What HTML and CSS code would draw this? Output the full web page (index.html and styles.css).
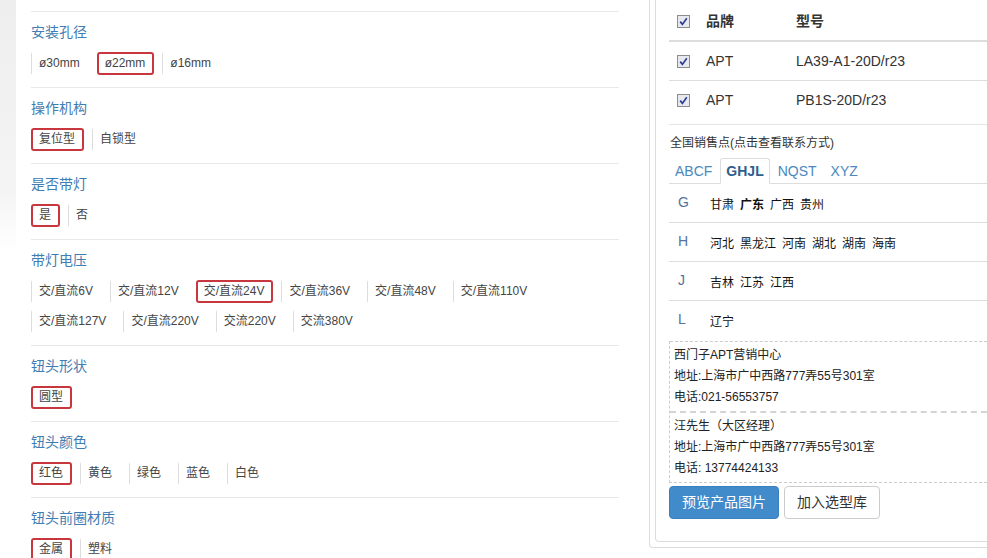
FILE: index.html
```html
<!DOCTYPE html>
<html lang="zh-CN">
<head>
    <meta charset="UTF-8">
    <meta name="viewport" content="width=device-width, initial-scale=1.0">
    <title>选型</title>
    <link rel="stylesheet" href="styles.css">
</head>
<body>
    <div class="page">
        <div class="side-shade"></div>
        <div class="filters">
            <div class="filter">
                <h3 class="filter-title">安装孔径</h3>
                <div class="options">
                    <span class="opt">ø30mm</span>
                    <span class="opt on">ø22mm</span>
                    <span class="opt">ø16mm</span>
                </div>
            </div>
            <div class="filter">
                <h3 class="filter-title">操作机构</h3>
                <div class="options">
                    <span class="opt on">复位型</span>
                    <span class="opt">自锁型</span>
                </div>
            </div>
            <div class="filter">
                <h3 class="filter-title">是否带灯</h3>
                <div class="options">
                    <span class="opt on">是</span>
                    <span class="opt">否</span>
                </div>
            </div>
            <div class="filter">
                <h3 class="filter-title">带灯电压</h3>
                <div class="options">
                    <span class="opt">交/直流6V</span>
                    <span class="opt">交/直流12V</span>
                    <span class="opt on">交/直流24V</span>
                    <span class="opt">交/直流36V</span>
                    <span class="opt">交/直流48V</span>
                    <span class="opt">交/直流110V</span>
                    <span class="opt">交/直流127V</span>
                    <span class="opt">交/直流220V</span>
                    <span class="opt">交流220V</span>
                    <span class="opt">交流380V</span>
                </div>
            </div>
            <div class="filter">
                <h3 class="filter-title">钮头形状</h3>
                <div class="options">
                    <span class="opt on">圆型</span>
                </div>
            </div>
            <div class="filter">
                <h3 class="filter-title">钮头颜色</h3>
                <div class="options">
                    <span class="opt on">红色</span>
                    <span class="opt">黄色</span>
                    <span class="opt">绿色</span>
                    <span class="opt">蓝色</span>
                    <span class="opt">白色</span>
                </div>
            </div>
            <div class="filter">
                <h3 class="filter-title">钮头前圈材质</h3>
                <div class="options">
                    <span class="opt on">金属</span>
                    <span class="opt">塑料</span>
                </div>
            </div>
        </div>

        <div class="panel">
            <div class="panel-inner">
                <table class="picked">
                    <colgroup>
                        <col class="c-chk">
                        <col class="c-brand">
                        <col>
                    </colgroup>
                    <thead>
                        <tr>
                            <th><svg class="chk" viewBox="0 0 13 13" width="13" height="13"><rect x="0.5" y="0.5" width="12" height="12" fill="#e8e9ee" stroke="#8c8c8c"/><path d="M3.2 6.6 L5.4 9.4 L9.8 3.2" fill="none" stroke="#2c3f94" stroke-width="1.7"/></svg></th>
                            <th>品牌</th>
                            <th>型号</th>
                        </tr>
                    </thead>
                    <tbody>
                        <tr>
                            <td><svg class="chk" viewBox="0 0 13 13" width="13" height="13"><rect x="0.5" y="0.5" width="12" height="12" fill="#e8e9ee" stroke="#8c8c8c"/><path d="M3.2 6.6 L5.4 9.4 L9.8 3.2" fill="none" stroke="#2c3f94" stroke-width="1.7"/></svg></td>
                            <td>APT</td>
                            <td>LA39-A1-20D/r23</td>
                        </tr>
                        <tr>
                            <td><svg class="chk" viewBox="0 0 13 13" width="13" height="13"><rect x="0.5" y="0.5" width="12" height="12" fill="#e8e9ee" stroke="#8c8c8c"/><path d="M3.2 6.6 L5.4 9.4 L9.8 3.2" fill="none" stroke="#2c3f94" stroke-width="1.7"/></svg></td>
                            <td>APT</td>
                            <td>PB1S-20D/r23</td>
                        </tr>
                    </tbody>
                </table>

                <div class="sales">
                    <p class="sales-title">全国销售点(点击查看联系方式)</p>
                    <ul class="tabs">
                        <li><a href="#">ABCF</a></li>
                        <li class="active"><a href="#">GHJL</a></li>
                        <li><a href="#">NQST</a></li>
                        <li><a href="#">XYZ</a></li>
                    </ul>
                    <div class="regions">
                        <div class="region">
                            <span class="letter">G</span>
                            <span class="provs"><span>甘肃</span><b>广东</b><span>广西</span><span>贵州</span></span>
                        </div>
                        <div class="region">
                            <span class="letter">H</span>
                            <span class="provs"><span>河北</span><span>黑龙江</span><span>河南</span><span>湖北</span><span>湖南</span><span>海南</span></span>
                        </div>
                        <div class="region">
                            <span class="letter">J</span>
                            <span class="provs"><span>吉林</span><span>江苏</span><span>江西</span></span>
                        </div>
                        <div class="region">
                            <span class="letter">L</span>
                            <span class="provs"><span>辽宁</span></span>
                        </div>
                    </div>
                    <div class="contacts">
                        <div class="contact">
                            <p>西门子APT营销中心</p>
                            <p>地址:上海市广中西路777弄55号301室</p>
                            <p>电话:021-56553757</p>
                        </div>
                        <div class="contact">
                            <p>汪先生（大区经理）</p>
                            <p>地址:上海市广中西路777弄55号301室</p>
                            <p>电话: 13774424133</p>
                        </div>
                    </div>
                    <div class="actions">
                        <button class="btn btn-primary">预览产品图片</button>
                        <button class="btn">加入选型库</button>
                    </div>
                </div>
            </div>
        </div>
    </div>
</body>
</html>
```

FILE: styles.css
```css
* {
    margin: 0;
    padding: 0;
    box-sizing: border-box;
}
html, body {
    width: 987px;
    height: 558px;
    overflow: hidden;
    background: #fff;
}
body {
    font-family: "Liberation Sans", Arial, "Noto Sans CJK SC", sans-serif;
    font-size: 12px;
    color: #333;
}
.page {
    display: flex;
    align-items: flex-start;
    width: 1040px;
}
.side-shade {
    flex: 0 0 16px;
    height: 252px;
    margin-right: 15px;
    background: linear-gradient(to bottom, #eeeeee, #f4f4f4 75%, #ffffff);
}

/* filters */
.filters {
    flex: 0 0 588px;
    margin-right: 30px;
    padding-top: 11px;
}
.filter {
    border-top: 1px solid #e8e8e8;
    padding: 10px 0 12px;
}
.filter-title {
    font-size: 14px;
    font-weight: normal;
    line-height: 20px;
    color: #3f7db3;
    margin-bottom: 10px;
}
.options {
    display: flex;
    flex-wrap: wrap;
    row-gap: 7px;
    max-width: 580px;
}
.opt {
    display: inline-block;
    line-height: 19px;
    padding: 0 7px;
    margin-right: 8px;
    border: 2px solid transparent;
    border-left: 1px solid #dcdcdc;
    color: #444;
    white-space: nowrap;
}
.opt.on {
    border: 2px solid #c7373d;
    border-radius: 3px;
    padding: 0 7px 0 6px;
}

/* right panel */
.panel {
    flex: 0 0 380px;
    border: 1px solid #dcdcdc;
    border-top: 0;
    border-radius: 0 0 4px 4px;
    padding: 0 0 5px 5px;
}
.panel-inner {
    border: 1px solid #dcdcdc;
    border-top: 0;
    border-radius: 0 0 4px 4px;
    padding: 0 0 22px 13px;
}
.picked {
    width: 100%;
    border-collapse: collapse;
    table-layout: fixed;
    font-size: 14px;
    margin-bottom: 5px;
}
.c-chk {
    width: 29px;
}
.c-brand {
    width: 90px;
}
.picked th {
    text-align: left;
    padding: 11px 8px 9px;
    line-height: 20px;
    border-bottom: 2px solid #dddddd;
    color: #333;
}
.picked td {
    padding: 9px 8px;
    line-height: 20px;
    border-top: 1px solid #dddddd;
    color: #333;
}
.picked tbody tr:first-child td {
    border-top: 0;
}
.chk {
    display: block;
}

.sales {
    border-top: 1px solid #e5e5e5;
    padding-top: 8px;
}
.sales-title {
    line-height: 20px;
    color: #333;
    margin-bottom: 5px;
    padding-left: 1px;
}
.tabs {
    display: flex;
    list-style: none;
    border-bottom: 1px solid #dddddd;
    font-size: 14px;
}
.tabs li {
    margin-right: 2px;
    margin-bottom: -1px;
}
.tabs a {
    display: block;
    padding: 3px 5px;
    line-height: 18px;
    border: 1px solid transparent;
    border-radius: 3px 3px 0 0;
    color: #4b88c0;
    text-decoration: none;
}
.tabs .active a {
    border-color: #dddddd #dddddd transparent;
    background: #fff;
    color: #2f5e8c;
    font-weight: bold;
}

.region {
    display: flex;
    align-items: flex-start;
    padding: 11px 0 7px;
    line-height: 20px;
    border-bottom: 1px solid #dddddd;
}
.region:last-child {
    border-bottom: 0;
}
.letter {
    flex: 0 0 41px;
    padding-left: 9px;
    font-size: 14px;
    line-height: 14px;
    color: #56739b;
}
.provs {
    display: flex;
    gap: 6px;
    color: #111;
}
.provs b {
    font-weight: bold;
}

.contacts {
    margin-top: 2px;
    border-left: 1px dashed #cccccc;
    border-bottom: 1px dashed #cccccc;
}
.contact {
    border-top: 1px dashed #cccccc;
    padding: 3px 4px;
    line-height: 21px;
    color: #222;
}
.contact + .contact {
    border-top: 2px dashed #d4d4d4;
}

.actions {
    display: flex;
    gap: 5px;
    margin-top: 3px;
}
.btn {
    font-family: "Liberation Sans", Arial, "Noto Sans CJK SC", sans-serif;
    font-size: 14px;
    line-height: 19px;
    padding: 6px 12px;
    border: 1px solid #cccccc;
    border-radius: 4px;
    background: #fff;
    color: #333;
}
.btn-primary {
    background: #428bca;
    border-color: #3a80bd;
    color: #fff;
}
```
